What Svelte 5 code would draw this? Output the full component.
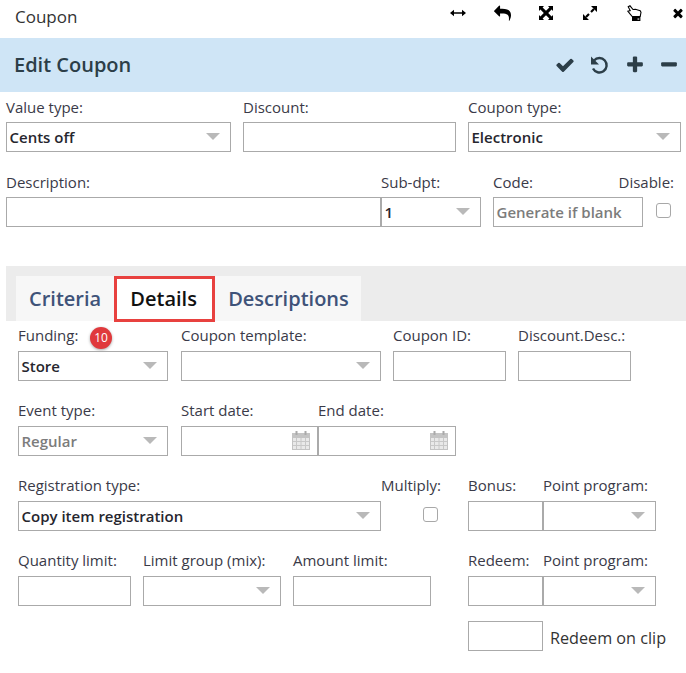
<script>
  const toolIcons = ['width', 'reply', 'fit', 'expand', 'hand', 'close'];
</script>

{#snippet arrow()}
  <span class="arrow"></span>
{/snippet}

{#snippet calendar()}
  <svg class="cal" viewBox="0 0 18 20" width="18" height="20">
    <path fill="#c4c4c4" d="M0 3h18v17H0z" />
    <path fill="#e9e9e9" d="M1 8h16v11H1z" />
    <path stroke="#c8c8c8" d="M4.500 8v11M9 8v11M13.500 8v11M1 11.500h16M1 15.500h16" />
    <path fill="none" stroke="#aaa" stroke-width="2" d="M4.500 5V1M13.500 5V1" />
  </svg>
{/snippet}

<div class="page">
  <header class="titlebar">
    <span class="title">Coupon</span>
    <div class="tools">
      {#each toolIcons as name}
        <span class="tool">
          {#if name === 'width'}
            <svg viewBox="0 0 16 16" width="16" height="16"><path d="M0 8l4-3.200v2.400h8V4.800L16 8l-4 3.200V8.800H4v2.400z" /></svg>
          {:else if name === 'reply'}
            <svg viewBox="0 0 1792 1792" width="17" height="17"><path d="M1792 1120q0 166-127 451-3 7-10.500 24t-13.500 30-13 22q-12 17-28 17-15 0-23.500-10t-8.500-25q0-9 2.500-26.500t2.500-23.500q5-68 5-123 0-101-17.500-181t-48.500-138.500-80-101-105.500-69.500-133-42.500-154-21.500-175.500-6h-224v256q0 26-19 45t-45 19-45-19l-512-512q-19-19-19-45t19-45l512-512q19-19 45-19t45 19 19 45v256h224q713 0 875 403 53 134 53 333z" /></svg>
          {:else if name === 'fit'}
            <svg viewBox="0 0 14 14" width="14" height="14"><path d="M0 0h5L3.600 1.400 7 4.800l3.400-3.400L9 0h5v5l-1.400-1.400L9.200 7l3.400 3.400L14 9v5H9l1.400-1.400L7 9.200l-3.400 3.400L5 14H0V9l1.400 1.400L4.800 7 1.400 3.600 0 5z" /></svg>
          {:else if name === 'expand'}
            <svg viewBox="0 0 14 14" width="14" height="14"><path d="M8 0h6v6zM0 8l6 6H0z" /><path stroke="#000" stroke-width="2.200" d="M11 3L8 6M6 8l-3 3" /></svg>
          {:else if name === 'hand'}
            <svg viewBox="0 0 15 16" width="15" height="16"><path fill="#fff" stroke="#000" stroke-width="1.100" d="M.8 6.200l2.400-.6L1.200 1.800 3 .8l3 3.700 2.500-.3 2.300.7 2.400.8.800 1.600-.8 4.200H5.200L3.200 9.200z" /><path d="M5 11.500h8.400V16H5z" /><path fill="#fff" d="M10.500 13.500h1.800v1.100h-1.800z" /></svg>
          {:else}
            <svg viewBox="0 0 1792 1792" width="14" height="14"><path d="M1490 1322q0 40-28 68l-136 136q-28 28-68 28t-68-28l-294-294-294 294q-28 28-68 28t-68-28l-136-136q-28-28-28-68t28-68l294-294-294-294q-28-28-28-68t28-68l136-136q28-28 68-28t68 28l294 294 294-294q28-28 68-28t68 28l136 136q28 28 28 68t-28 68l-294 294 294 294q28 28 28 68z" /></svg>
          {/if}
        </span>
      {/each}
    </div>
  </header>

  <div class="band">
    <h1>Edit Coupon</h1>
    <div class="actions">
      <svg viewBox="0 0 1792 1792" width="20" height="20"><path d="M1671 566q0 40-28 68l-724 724-136 136q-28 28-68 28t-68-28l-136-136-362-362q-28-28-28-68t28-68l136-136q28-28 68-28t68 28l294 295 656-657q28-28 68-28t68 28l136 136q28 28 28 68z" /></svg>
      <svg viewBox="0 0 20 20" width="20" height="20"><path fill="none" stroke="#2c3e48" stroke-width="2.400" d="M5 5.500A7.200 7.200 0 1 1 4 13.500" /><path d="M2 1.500v8h8z" /></svg>
      <svg class="plus" viewBox="0 0 1792 1792" width="20" height="20"><path d="M1600 736v192q0 40-28 68t-68 28h-416v416q0 40-28 68t-68 28h-192q-40 0-68-28t-28-68v-416h-416q-40 0-68-28t-28-68v-192q0-40 28-68t68-28h416v-416q0-40 28-68t68-28h192q40 0 68 28t28 68v416h416q40 0 68 28t28 68z" /></svg>
      <svg viewBox="0 0 1792 1792" width="20" height="20"><path d="M1600 736v192q0 40-28 68t-68 28h-1216q-40 0-68-28t-28-68v-192q0-40 28-68t68-28h1216q40 0 68 28t28 68z" /></svg>
    </div>
  </div>

  <section class="top-form">
    <div class="row">
      <div class="field w225">
        <span class="label">Value type:</span>
        <div class="box">Cents off {@render arrow()}</div>
      </div>
      <div class="field w213 gap12">
        <span class="label">Discount:</span>
        <div class="box"></div>
      </div>
      <div class="field w213 gap12">
        <span class="label">Coupon type:</span>
        <div class="box">Electronic {@render arrow()}</div>
      </div>
    </div>
    <div class="row">
      <div class="field w375">
        <span class="label">Description:</span>
        <div class="box"></div>
      </div>
      <div class="field w100">
        <span class="label">Sub-dpt:</span>
        <div class="box">1 {@render arrow()}</div>
      </div>
      <div class="field w150 gap12">
        <span class="label">Code:</span>
        <div class="box muted">Generate if blank</div>
      </div>
      <div class="field check-field disable">
        <span class="label">Disable:</span>
        <div class="check-wrap"><span class="check"></span></div>
      </div>
    </div>
  </section>

  <div class="tabs-band">
    <nav class="tabs">
      <span class="tab">Criteria</span>
      <span class="tab active">Details</span>
      <span class="tab last">Descriptions</span>
    </nav>
  </div>

  <section class="details">
    <div class="row">
      <div class="field w150">
        <span class="label">Funding:</span>
        <span class="badge">10</span>
        <div class="box">Store {@render arrow()}</div>
      </div>
      <div class="field w200 gap13">
        <span class="label">Coupon template:</span>
        <div class="box">{@render arrow()}</div>
      </div>
      <div class="field w113 gap12">
        <span class="label">Coupon ID:</span>
        <div class="box"></div>
      </div>
      <div class="field w113 gap12">
        <span class="label">Discount.Desc.:</span>
        <div class="box"></div>
      </div>
    </div>
    <div class="row">
      <div class="field w150">
        <span class="label">Event type:</span>
        <div class="box muted">Regular {@render arrow()}</div>
      </div>
      <div class="field w137 gap13">
        <span class="label">Start date:</span>
        <div class="box">{@render calendar()}</div>
      </div>
      <div class="field w138">
        <span class="label">End date:</span>
        <div class="box">{@render calendar()}</div>
      </div>
    </div>
    <div class="row">
      <div class="field w363">
        <span class="label">Registration type:</span>
        <div class="box">Copy item registration {@render arrow()}</div>
      </div>
      <div class="field check-field multiply">
        <span class="label">Multiply:</span>
        <div class="check-wrap"><span class="check"></span></div>
      </div>
      <div class="field w75">
        <span class="label">Bonus:</span>
        <div class="box"></div>
      </div>
      <div class="field w113">
        <span class="label">Point program:</span>
        <div class="box">{@render arrow()}</div>
      </div>
    </div>
    <div class="row">
      <div class="field w113">
        <span class="label">Quantity limit:</span>
        <div class="box"></div>
      </div>
      <div class="field w138 gap12">
        <span class="label">Limit group (mix):</span>
        <div class="box">{@render arrow()}</div>
      </div>
      <div class="field w138 gap12">
        <span class="label">Amount limit:</span>
        <div class="box"></div>
      </div>
      <div class="field w75 redeem">
        <span class="label">Redeem:</span>
        <div class="box"></div>
      </div>
      <div class="field w113">
        <span class="label">Point program:</span>
        <div class="box">{@render arrow()}</div>
      </div>
    </div>
    <div class="clip-row">
      <div class="box w75"></div>
      <span class="clip-text">Redeem on clip</span>
    </div>
  </section>
</div>

<style>
  :global(body) {
    background: #fff;
  }

  .page {
    width: 686px;
    height: 673px;
    overflow: hidden;
    font-family: "Open Sans", sans-serif;
    font-size: 15px;
    color: #2d2d3a;
  }

  /* Title bar */
  .titlebar {
    height: 38px;
    display: flex;
    justify-content: space-between;
    padding-left: 15px;
    box-sizing: border-box;
  }

  .title {
    font-size: 17px;
    line-height: 34px;
    color: #333;
  }

  .tools {
    display: flex;
    width: 252px;
    height: 26px;
    margin-right: -2px;
  }

  .tool {
    width: 44px;
    height: 26px;
    display: flex;
    align-items: center;
    justify-content: center;
    flex: none;
  }

  /* Edit band */
  .band {
    height: 54px;
    background: #cfe5f6;
    display: flex;
    align-items: center;
    justify-content: space-between;
    padding: 0 7px 0 14px;
  }

  h1 {
    margin: 0 0 2px;
    font-size: 20px;
    font-weight: 600;
    color: #2c3e48;
  }

  .actions {
    display: flex;
    gap: 14px;
    fill: #2c3e48;
  }

  .plus {
    margin-left: 2px;
  }

  /* Form rows */
  .top-form {
    padding: 5px 0 0 6px;
  }

  .details {
    padding: 5px 0 0 18px;
  }

  .row {
    display: flex;
    margin-bottom: 20px;
  }

  .field {
    position: relative;
    flex: none;
  }

  .label {
    display: block;
    height: 20px;
    line-height: 21px;
    margin-bottom: 5px;
    white-space: nowrap;
    color: #3a3a48;
  }

  .details .label {
    line-height: 19px;
  }

  .box {
    position: relative;
    height: 30px;
    box-sizing: border-box;
    border: 1.500px solid #aaa;
    padding-left: 2.500px;
    line-height: 28px;
    font-weight: 600;
    color: #26262e;
    white-space: nowrap;
  }

  .box.muted {
    color: #7c7c7c;
  }

  .arrow {
    position: absolute;
    right: 10px;
    top: 10px;
    width: 0;
    height: 0;
    border-left: 7px solid transparent;
    border-right: 7px solid transparent;
    border-top: 7px solid #b9b9b9;
  }

  .cal {
    position: absolute;
    right: 7px;
    top: 3px;
  }

  .w75 { width: 75px; }
  .w100 { width: 100px; }
  .w113 { width: 113px; }
  .w137 { width: 137px; }
  .w138 { width: 138px; }
  .w150 { width: 150px; }
  .w200 { width: 200px; }
  .w213 { width: 213px; }
  .w225 { width: 225px; }
  .w363 { width: 363px; }
  .w375 { width: 375px; }

  .gap12 { margin-left: 12px; }
  .gap13 { margin-left: 13px; }

  .redeem { margin-left: 37px; }

  /* Checkbox columns */
  .check-field {
    display: flex;
    flex-direction: column;
    align-items: flex-end;
  }

  .disable {
    width: 31px;
  }

  .multiply {
    width: 60px;
    margin-right: 27px;
  }

  .check-wrap {
    height: 30px;
    width: 100%;
    display: flex;
    align-items: center;
    justify-content: flex-end;
    padding: 0 3px 3px 0;
    box-sizing: border-box;
  }

  .check {
    width: 15px;
    height: 15px;
    flex: none;
    box-sizing: border-box;
    border: 1.500px solid #a8a8a8;
    border-radius: 3px;
    background: #fff;
  }

  /* Tabs */
  .tabs-band {
    margin: 39px 0 0 6px;
    height: 55px;
    padding: 10px 0 0 10px;
    box-sizing: border-box;
    background: #ececec;
  }

  .tabs {
    display: inline-flex;
    height: 45px;
    background: #f7f7f7;
  }

  .tab {
    box-sizing: border-box;
    height: 46px;
    padding: 0 13px;
    font-size: 20px;
    font-weight: 600;
    line-height: 46px;
    color: #3f5379;
  }

  .tab.last {
    padding: 0 12px 0 13px;
  }

  .tab.active {
    width: 101px;
    background: #fff;
    color: #111;
    border: 3px solid #e8413f;
    padding: 0 2px 0 0;
    line-height: 40px;
    text-align: center;
  }

  /* Badge over the Funding label */
  .badge {
    position: absolute;
    left: 72px;
    top: 1px;
    width: 22px;
    height: 22px;
    border-radius: 50%;
    background: #e0393c;
    color: #fff;
    font-size: 12px;
    line-height: 22px;
    text-align: center;
    box-shadow: 0 1px 3px rgba(0, 0, 0, 0.35);
  }

  .clip-row {
    display: flex;
    align-items: center;
    gap: 7px;
    margin: -5px 0 0 450px;
  }

  .clip-text {
    padding-top: 3px;
    font-size: 16.200px;
    color: #333;
  }
</style>
